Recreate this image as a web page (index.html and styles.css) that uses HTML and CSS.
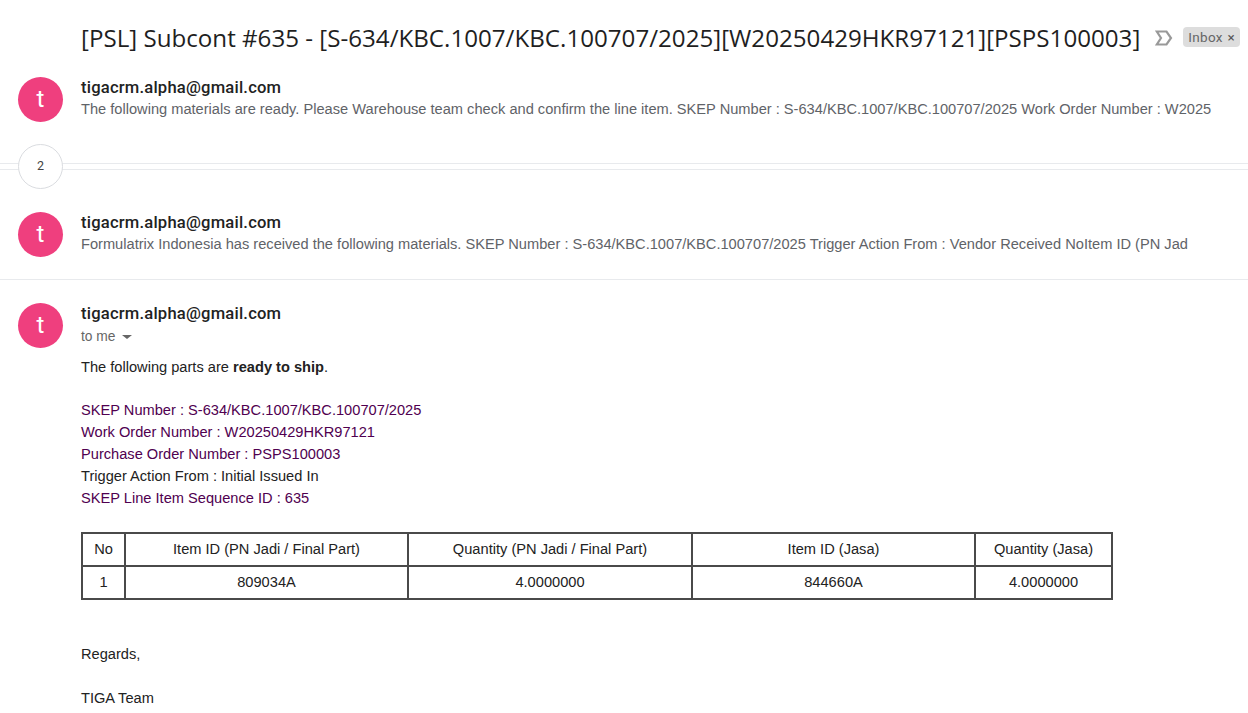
FILE: index.html
```html
<!DOCTYPE html>
<html lang="en">
<head>
    <meta charset="UTF-8" />
    <title>[PSL] Subcont #635</title>
    <link rel="stylesheet" href="styles.css">
</head>
<body>
    <!-- Subject line -->
    <div class="subject">
        <h1 class="subject-text">[PSL] Subcont #635 - [S-634/KBC.1007/KBC.100707/2025][W20250429HKR97121][PSPS100003]</h1>
        <svg class="important" width="18" height="16" viewBox="0 0 18 16">
            <path d="M1.8 1.5H11.5L16 8L11.5 14.5H1.8L6 8Z" fill="none" stroke="#999999" stroke-width="2.2"/>
        </svg>
        <span class="label">Inbox <span class="label-x">×</span></span>
    </div>

    <!-- First message, collapsed -->
    <div class="message first">
        <div class="avatar">t</div>
        <div class="message-body">
            <div class="sender">tigacrm.alpha@gmail.com</div>
            <div class="snippet">The following materials are ready. Please Warehouse team check and confirm the line item. SKEP Number : S-634/KBC.1007/KBC.100707/2025 Work Order Number : W2025</div>
        </div>
    </div>

    <!-- Hidden messages -->
    <div class="collapsed-bar">
        <div class="count">2</div>
    </div>

    <!-- Second message, collapsed -->
    <div class="message second">
        <div class="avatar">t</div>
        <div class="message-body">
            <div class="sender">tigacrm.alpha@gmail.com</div>
            <div class="snippet">Formulatrix Indonesia has received the following materials. SKEP Number : S-634/KBC.1007/KBC.100707/2025 Trigger Action From : Vendor Received NoItem ID (PN Jad</div>
        </div>
    </div>

    <!-- Open message -->
    <div class="message open">
        <div class="avatar">t</div>
        <div class="message-body">
            <div class="sender">tigacrm.alpha@gmail.com</div>
            <div class="to-me">to me <span class="caret"></span></div>
            <div class="mail">
                <p class="intro">The following parts are <b>ready to ship</b>.</p>
                <div class="details">
                    <div class="purple">SKEP Number : S-634/KBC.1007/KBC.100707/2025</div>
                    <div class="purple">Work Order Number : W20250429HKR97121</div>
                    <div class="purple">Purchase Order Number : PSPS100003</div>
                    <div>Trigger Action From : Initial Issued In</div>
                    <div class="purple">SKEP Line Item Sequence ID : 635</div>
                </div>
                <table class="parts">
                    <tr>
                        <th class="col-no">No</th>
                        <th class="col-item">Item ID (PN Jadi / Final Part)</th>
                        <th class="col-qty">Quantity (PN Jadi / Final Part)</th>
                        <th class="col-jasa">Item ID (Jasa)</th>
                        <th>Quantity (Jasa)</th>
                    </tr>
                    <tr>
                        <td>1</td>
                        <td>809034A</td>
                        <td>4.0000000</td>
                        <td>844660A</td>
                        <td>4.0000000</td>
                    </tr>
                </table>
                <p class="regards">Regards,</p>
                <p class="team">TIGA Team</p>
            </div>
        </div>
    </div>
</body>
</html>
```

FILE: styles.css
```css
/* Basic Styling */
html, body { height: 713px; overflow: hidden; }
body {
    margin: 0;
    background-color: #ffffff;
    color: #222222;
    font-family: "Liberation Sans", Arial, sans-serif;
    font-size: 14.63px;
}

/* Subject line */
.subject {
    display: flex;
    align-items: center;
    height: 38px;
    padding: 18px 0 1px 81px;
}
.subject-text {
    margin: 0;
    font-family: "Open Sans", sans-serif;
    font-size: 24.15px;
    font-weight: 400;
    color: #1f1f1f;
    white-space: nowrap;
}
.important { margin: 2px 0 0 15px; }
.label {
    margin: 0 0 0 10px;
    padding: 0 5px;
    height: 20px;
    line-height: 20px;
    border-radius: 4px;
    background-color: #dddddd;
    color: #666666;
    font-family: Roboto, sans-serif;
    font-size: 13.5px;
    letter-spacing: 0.3px;
    white-space: nowrap;
}
.label-x { margin-left: 1px; color: #555555; }

/* Messages */
.message {
    display: flex;
    padding-left: 18px;
}
.first { height: 86px; padding-top: 20px; }
.second {
    height: 67px;
    padding-top: 42px;
    border-bottom: 1px solid #e8eaed;
}
.open { padding-top: 23px; }
.avatar {
    flex: none;
    width: 45px;
    height: 45px;
    margin-right: 18px;
    border-radius: 50%;
    background-color: #ef3f7e;
    color: #ffffff;
    font-family: Roboto, sans-serif;
    font-size: 24px;
    line-height: 45px;
    text-align: center;
}
.message-body { min-width: 0; }
.sender {
    padding-top: 1px;
    font-family: Roboto, sans-serif;
    font-size: 16.6px;
    font-weight: 500;
    letter-spacing: 0.2px;
    line-height: 19px;
    color: #222222;
}
.snippet {
    margin-top: 2px;
    color: #5f6368;
    line-height: 20px;
    white-space: nowrap;
}
.to-me {
    margin-top: 4px;
    color: #666666;
    font-size: 13.8px;
    line-height: 20px;
}
.caret {
    display: inline-block;
    margin-left: 3px;
    border-top: 4px solid #666666;
    border-left: 5px solid transparent;
    border-right: 5px solid transparent;
    vertical-align: middle;
}

/* Hidden messages divider */
.collapsed-bar {
    position: relative;
    height: 5px;
    border-top: 1px solid #e8eaed;
    border-bottom: 1px solid #e8eaed;
}
.count {
    position: absolute;
    left: 18px;
    top: -20px;
    box-sizing: border-box;
    width: 45px;
    height: 45px;
    border: 1px solid #dadce0;
    border-radius: 50%;
    background-color: #ffffff;
    color: #444444;
    font-family: Roboto, sans-serif;
    font-size: 12.5px;
    line-height: 41px;
    text-align: center;
}

/* Mail content */
.mail { line-height: 22px; }
.intro { margin: 9px 0 21px; }
.purple { color: #500050; }
.parts {
    width: 1032px;
    margin-top: 23px;
    border-collapse: collapse;
    table-layout: fixed;
    color: #222222;
    font-size: 14.63px;
}
.parts th, .parts td {
    height: 33px;
    padding: 0 0 1px;
    box-sizing: border-box;
    border: 2px solid #4a4a4a;
    font-weight: 400;
    text-align: center;
}
.col-no { width: 43px; }
.col-item { width: 283px; }
.col-qty { width: 284px; }
.col-jasa { width: 283px; }
.regards { margin: 43px 0 22px; }
.team { margin: 0; }
```
